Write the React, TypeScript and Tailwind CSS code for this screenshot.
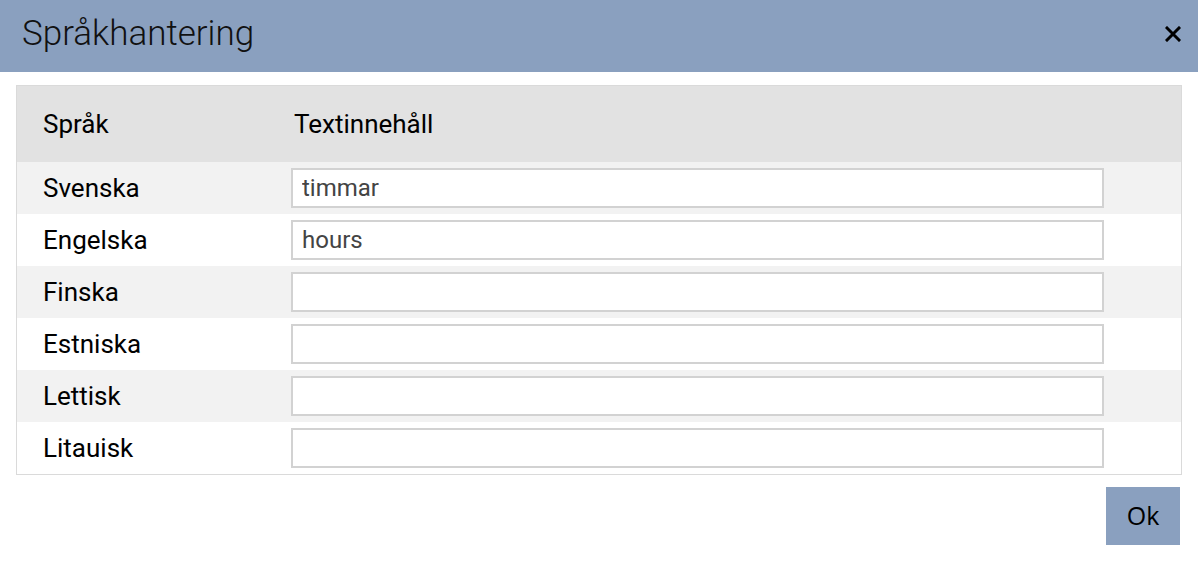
const languages = [
    { name: "Svenska", value: "timmar" },
    { name: "Engelska", value: "hours" },
    { name: "Finska", value: "" },
    { name: "Estniska", value: "" },
    { name: "Lettisk", value: "" },
    { name: "Litauisk", value: "" },
]

export default function App() {
    return (
        <div className="w-[1198px] h-[576px] bg-white font-['Roboto',sans-serif] text-black">
            {/* Title bar */}
            <div className="h-[72px] bg-[#8aa0bf] flex items-center justify-between pl-[22px] pr-[17px]">
                <h1 className="text-[35px] font-light leading-none text-[#111] mb-[6px]">Språkhantering</h1>
                <svg width="16" height="16" viewBox="0 0 16 16" className="mb-[4px]">
                    <path d="M2 2 L14 14 M14 2 L2 14" stroke="black" strokeWidth="3" strokeLinecap="square" />
                </svg>
            </div>

            {/* Table */}
            <div className="mx-[16px] mt-[13px] border border-[#dadada]">
                <div className="h-[76px] bg-[#e2e2e2] flex items-center text-[26px]">
                    <div className="w-[274px] pl-[26px]">Språk</div>
                    <div className="pl-[3px]">Textinnehåll</div>
                </div>
                {languages.map((lang, i) => (
                    <div
                        key={lang.name}
                        className={
                            "h-[52px] flex items-center text-[26px] " +
                            (i % 2 === 0 ? "bg-[#f2f2f2]" : "bg-white")
                        }
                    >
                        <div className="w-[274px] pl-[26px]">{lang.name}</div>
                        <input
                            defaultValue={lang.value}
                            className="w-[813px] h-[40px] bg-white border-2 border-[#d2d2d2] px-[9px] text-[24px] text-[#444] outline-none"
                        />
                    </div>
                ))}
            </div>

            {/* Footer */}
            <div className="flex justify-end pr-[18px] pt-[12px]">
                <button className="w-[74px] h-[58px] bg-[#8aa0bf] text-[25px] font-['Open_Sans',sans-serif] text-black">
                    Ok
                </button>
            </div>
        </div>
    )
}
